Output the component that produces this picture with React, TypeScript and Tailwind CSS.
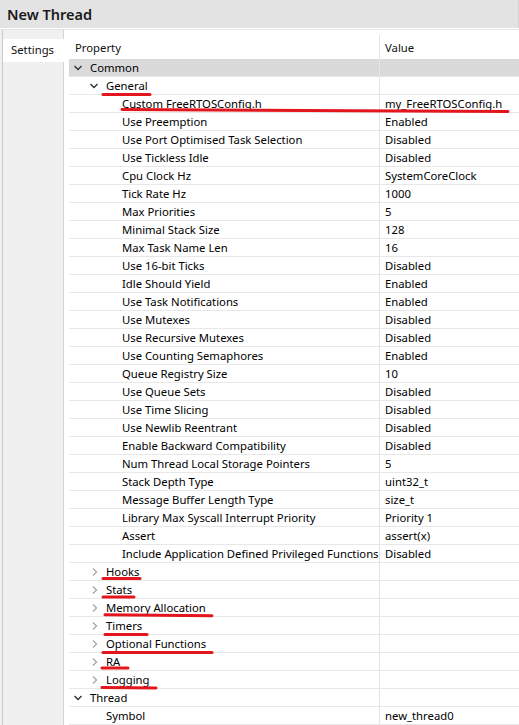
import React from 'react';

type Row = {
  label: string;
  value?: string;
  level: 0 | 1 | 2;
  kind: 'open' | 'closed' | 'leaf';
  shaded?: boolean;
};

const rows: Row[] = [
  { label: 'Common', level: 0, kind: 'open', shaded: true },
  { label: 'General', level: 1, kind: 'open' },
  { label: 'Custom FreeRTOSConfig.h', value: 'my_FreeRTOSConfig.h', level: 2, kind: 'leaf' },
  { label: 'Use Preemption', value: 'Enabled', level: 2, kind: 'leaf' },
  { label: 'Use Port Optimised Task Selection', value: 'Disabled', level: 2, kind: 'leaf' },
  { label: 'Use Tickless Idle', value: 'Disabled', level: 2, kind: 'leaf' },
  { label: 'Cpu Clock Hz', value: 'SystemCoreClock', level: 2, kind: 'leaf' },
  { label: 'Tick Rate Hz', value: '1000', level: 2, kind: 'leaf' },
  { label: 'Max Priorities', value: '5', level: 2, kind: 'leaf' },
  { label: 'Minimal Stack Size', value: '128', level: 2, kind: 'leaf' },
  { label: 'Max Task Name Len', value: '16', level: 2, kind: 'leaf' },
  { label: 'Use 16-bit Ticks', value: 'Disabled', level: 2, kind: 'leaf' },
  { label: 'Idle Should Yield', value: 'Enabled', level: 2, kind: 'leaf' },
  { label: 'Use Task Notifications', value: 'Enabled', level: 2, kind: 'leaf' },
  { label: 'Use Mutexes', value: 'Disabled', level: 2, kind: 'leaf' },
  { label: 'Use Recursive Mutexes', value: 'Disabled', level: 2, kind: 'leaf' },
  { label: 'Use Counting Semaphores', value: 'Enabled', level: 2, kind: 'leaf' },
  { label: 'Queue Registry Size', value: '10', level: 2, kind: 'leaf' },
  { label: 'Use Queue Sets', value: 'Disabled', level: 2, kind: 'leaf' },
  { label: 'Use Time Slicing', value: 'Disabled', level: 2, kind: 'leaf' },
  { label: 'Use Newlib Reentrant', value: 'Disabled', level: 2, kind: 'leaf' },
  { label: 'Enable Backward Compatibility', value: 'Disabled', level: 2, kind: 'leaf' },
  { label: 'Num Thread Local Storage Pointers', value: '5', level: 2, kind: 'leaf' },
  { label: 'Stack Depth Type', value: 'uint32_t', level: 2, kind: 'leaf' },
  { label: 'Message Buffer Length Type', value: 'size_t', level: 2, kind: 'leaf' },
  { label: 'Library Max Syscall Interrupt Priority', value: 'Priority 1', level: 2, kind: 'leaf' },
  { label: 'Assert', value: 'assert(x)', level: 2, kind: 'leaf' },
  { label: 'Include Application Defined Privileged Functions', value: 'Disabled', level: 2, kind: 'leaf' },
  { label: 'Hooks', level: 1, kind: 'closed' },
  { label: 'Stats', level: 1, kind: 'closed' },
  { label: 'Memory Allocation', level: 1, kind: 'closed' },
  { label: 'Timers', level: 1, kind: 'closed' },
  { label: 'Optional Functions', level: 1, kind: 'closed' },
  { label: 'RA', level: 1, kind: 'closed' },
  { label: 'Logging', level: 1, kind: 'closed' },
  { label: 'Thread', level: 0, kind: 'open' },
  { label: 'Symbol', value: 'new_thread0', level: 1, kind: 'leaf' },
];

// indent for rows with a twisty, and for leaf rows
const groupPad = ['pl-[1px]', 'pl-[17px]', 'pl-[33px]'];
const leafPad = ['pl-[21px]', 'pl-[37px]', 'pl-[53px]'];

// red annotation strokes laid over the tree
const marks: [number, number, number, number][] = [
  [103, 94.5, 150, 94.5],
  [122, 109.5, 508, 111.5],
  [103, 578.5, 140, 578.5],
  [103, 597, 134, 597],
  [105, 614.8, 212, 615.8],
  [105, 634.5, 147, 634.5],
  [103, 652.5, 212, 652.5],
  [102, 668, 128, 668],
  [102, 687.5, 156, 688],
];

const Twisty = ({ open }: { open: boolean }) => (
  <svg width="16" height="16" viewBox="0 0 16 16" className="shrink-0">
    {open ? (
      <path d="M4.5 6 L8 9.5 L11.5 6" fill="none" stroke="#333" strokeWidth="1.4" />
    ) : (
      <path d="M7 4.5 L10.5 8 L7 11.5" fill="none" stroke="#a6a6a6" strokeWidth="1.3" />
    )}
  </svg>
);

export default function App() {
  return (
    <div className="relative w-[519px] h-[725px] overflow-hidden bg-white text-black font-['Noto_Sans',sans-serif]">
      {/* title bar */}
      <div className="h-[28px] bg-[#e3e3e3] border-r border-[#d2d2d2] flex items-center pl-[7px] pt-[2px]">
        <span className="text-[14.5px] font-semibold text-[#1a1a1a]">New Thread</span>
      </div>
      <div className="h-[2px] border-b border-[#e4e4e4]" />

      <div className="flex h-[695px]">
        {/* tabs */}
        <div className="w-[64px] bg-[#f0f0f0] pl-[2px]">
          <div className="h-full flex flex-col border-l border-[#c9c9c9]">
            <div className="h-[9px] border-r border-[#d4d4d4]" />
            <div className="h-[23px] bg-white flex items-center pl-[8px] text-[11.3px] text-[#111]">Settings</div>
            <div className="flex-1 border-r border-[#d4d4d4]" />
          </div>
        </div>

        {/* property table */}
        <div className="flex-1 pl-[5px] pt-[5px] text-[11.3px]">
          <div className="h-[24px] grid grid-cols-[310px_1fr] items-center text-[#111]">
            <div className="pl-[6px] pt-[2px]">Property</div>
            <div className="h-full flex items-center pl-[5px] pt-[2px] border-l border-[#e3e3e3]">Value</div>
          </div>
          {rows.map((r, i) => (
            <div
              key={i}
              className={`h-[18px] grid grid-cols-[310px_1fr] border-b ${
                r.shaded ? 'bg-[#dadada] border-[#e6e6e6]' : 'border-[#e8e8e8]'
              }`}
            >
              <div className={`flex items-center whitespace-nowrap leading-[17px] ${r.kind === 'leaf' ? leafPad[r.level] : groupPad[r.level]}`}>
                {r.kind !== 'leaf' && <Twisty open={r.kind === 'open'} />}
                <span className={r.kind === 'leaf' ? '' : 'ml-[4px]'}>{r.label}</span>
              </div>
              <div className={`flex items-center pl-[5px] leading-[17px] whitespace-nowrap border-l ${r.shaded ? 'border-[#e6e6e6]' : 'border-[#e3e3e3]'}`}>
                {r.value}
              </div>
            </div>
          ))}
        </div>
      </div>

      {/* annotations */}
      <svg className="absolute inset-0 pointer-events-none" width="519" height="725">
        {marks.map(([x1, y1, x2, y2], i) => (
          <line key={i} x1={x1} y1={y1} x2={x2} y2={y2} stroke="#e2161c" strokeWidth="3" strokeLinecap="round" />
        ))}
      </svg>
    </div>
  );
}
